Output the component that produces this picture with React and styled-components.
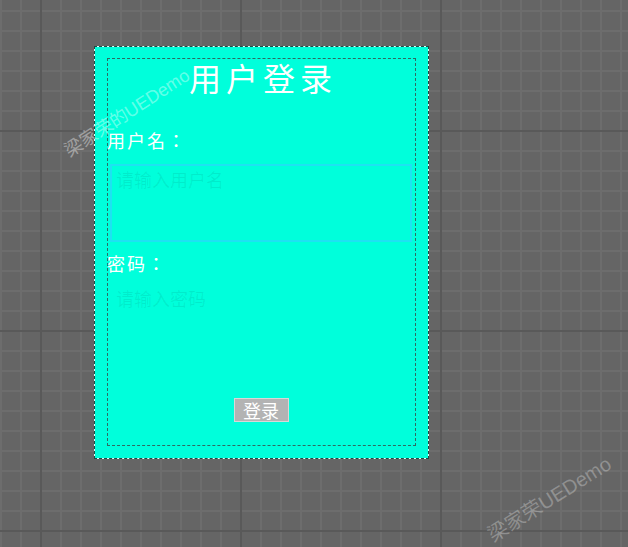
import React from 'react';
import styled, {createGlobalStyle} from 'styled-components';

const GlobalStyle = createGlobalStyle`
  html, body {
    margin: 0;
    height: 100%;
  }
  body {
    font-family: "Noto Sans CJK SC", "Noto Sans", sans-serif;
    background-color: #656565;
    background-image:
      linear-gradient(to right, #595959 2px, transparent 2px),
      linear-gradient(to bottom, #595959 2px, transparent 2px),
      linear-gradient(to right, #6d6d6d 2px, transparent 2px),
      linear-gradient(to bottom, #6d6d6d 2px, transparent 2px);
    background-size: 200px 100%, 100% 200px, 20px 100%, 100% 20px;
    background-position: 40px 0, 0 130px, 0 0, 0 10px;
    overflow: hidden;
  }
`;

const Page = styled.div`
  position: relative;
  width: 628px;
  height: 547px;
  padding: 46px 0 0 94px;
  box-sizing: border-box;
`;

const Card = styled.div`
  width: 335px;
  height: 413px;
  box-sizing: border-box;
  padding: 11px 12px 12px 12px;
  background: #00ffdb;
  border: 1px solid #dffff8;
  outline: 1px dashed #1f4a44;
  outline-offset: -1px;
`;

const Inner = styled.form`
  height: 100%;
  box-sizing: border-box;
  border: 1px dashed #2e6b60;
  display: flex;
  flex-direction: column;
  padding: 0 2px 0 0;
`;

const Title = styled.h1`
  margin: -2px 0 0;
  padding-left: 5px;
  text-align: center;
  font-size: 32px;
  font-weight: 400;
  line-height: 40px;
  letter-spacing: 5px;
  color: #fff;
`;

const Label = styled.label`
  display: block;
  margin-top: ${p => p.$top}px;
  margin-left: -1px;
  font-family: "Noto Sans CJK JP", "Noto Sans CJK SC", sans-serif;
  font-size: 18px;
  line-height: 26px;
  letter-spacing: 2px;
  color: #fff;
`;

const Field = styled.textarea`
  display: block;
  margin: 11px 0 0 2px;
  width: 302px;
  height: 78px;
  box-sizing: border-box;
  padding: 1px 4px;
  border: 2px solid #1ee2f2;
  background: transparent;
  font-family: inherit;
  font-size: 18px;
  line-height: 24px;
  resize: none;
  outline: none;
  color: #005a4c;
  &::placeholder {
    color: rgba(0, 60, 50, 0.09);
  }
`;

const PassField = styled.input`
  display: block;
  margin: 3px 0 0 2px;
  width: 302px;
  height: 40px;
  box-sizing: border-box;
  padding: 0 6px 2px;
  border: none;
  background: transparent;
  font-family: inherit;
  font-size: 18px;
  outline: none;
  &::placeholder {
    color: rgba(0, 60, 50, 0.09);
  }
`;

const Actions = styled.div`
  margin-top: auto;
  margin-bottom: 23px;
  display: flex;
  justify-content: center;
  padding-left: 1px;
`;

const Button = styled.button`
  width: 55px;
  height: 24px;
  padding: 0;
  border: 1px solid #d8d8d8;
  background: #b3b3b3;
  color: #fff;
  font-family: inherit;
  font-size: 18px;
  line-height: 20px;
  cursor: pointer;
`;

const Watermark = styled.div`
  position: absolute;
  left: ${p => p.$x}px;
  top: ${p => p.$y}px;
  transform: rotate(${p => p.$angle}deg);
  transform-origin: 0 0;
  font-family: "Liberation Sans", "Noto Sans CJK SC", sans-serif;
  font-size: ${p => p.$size}px;
  white-space: nowrap;
  color: ${p => p.$color};
  pointer-events: none;
`;

export default function App() {
    return (
        <>
            <GlobalStyle/>
            <Page>
                <Card>
                    <Inner onSubmit={e => e.preventDefault()}>
                        <Title>用户登录</Title>
                        <Label $top={30}>用户名：</Label>
                        <Field placeholder="请输入用户名"/>
                        <Label $top={8}>密码：</Label>
                        <PassField type="password" placeholder="请输入密码"/>
                        <Actions>
                            <Button type="submit">登录</Button>
                        </Actions>
                    </Inner>
                </Card>
                <Watermark $x={58} $y={140} $angle={-33} $size={18} $color="rgba(255,255,255,0.4)">梁家荣的UEDemo</Watermark>
                <Watermark $x={481} $y={523} $angle={-32} $size={20} $color="rgba(255,255,255,0.28)">梁家荣UEDemo</Watermark>
            </Page>
        </>
    );
}
